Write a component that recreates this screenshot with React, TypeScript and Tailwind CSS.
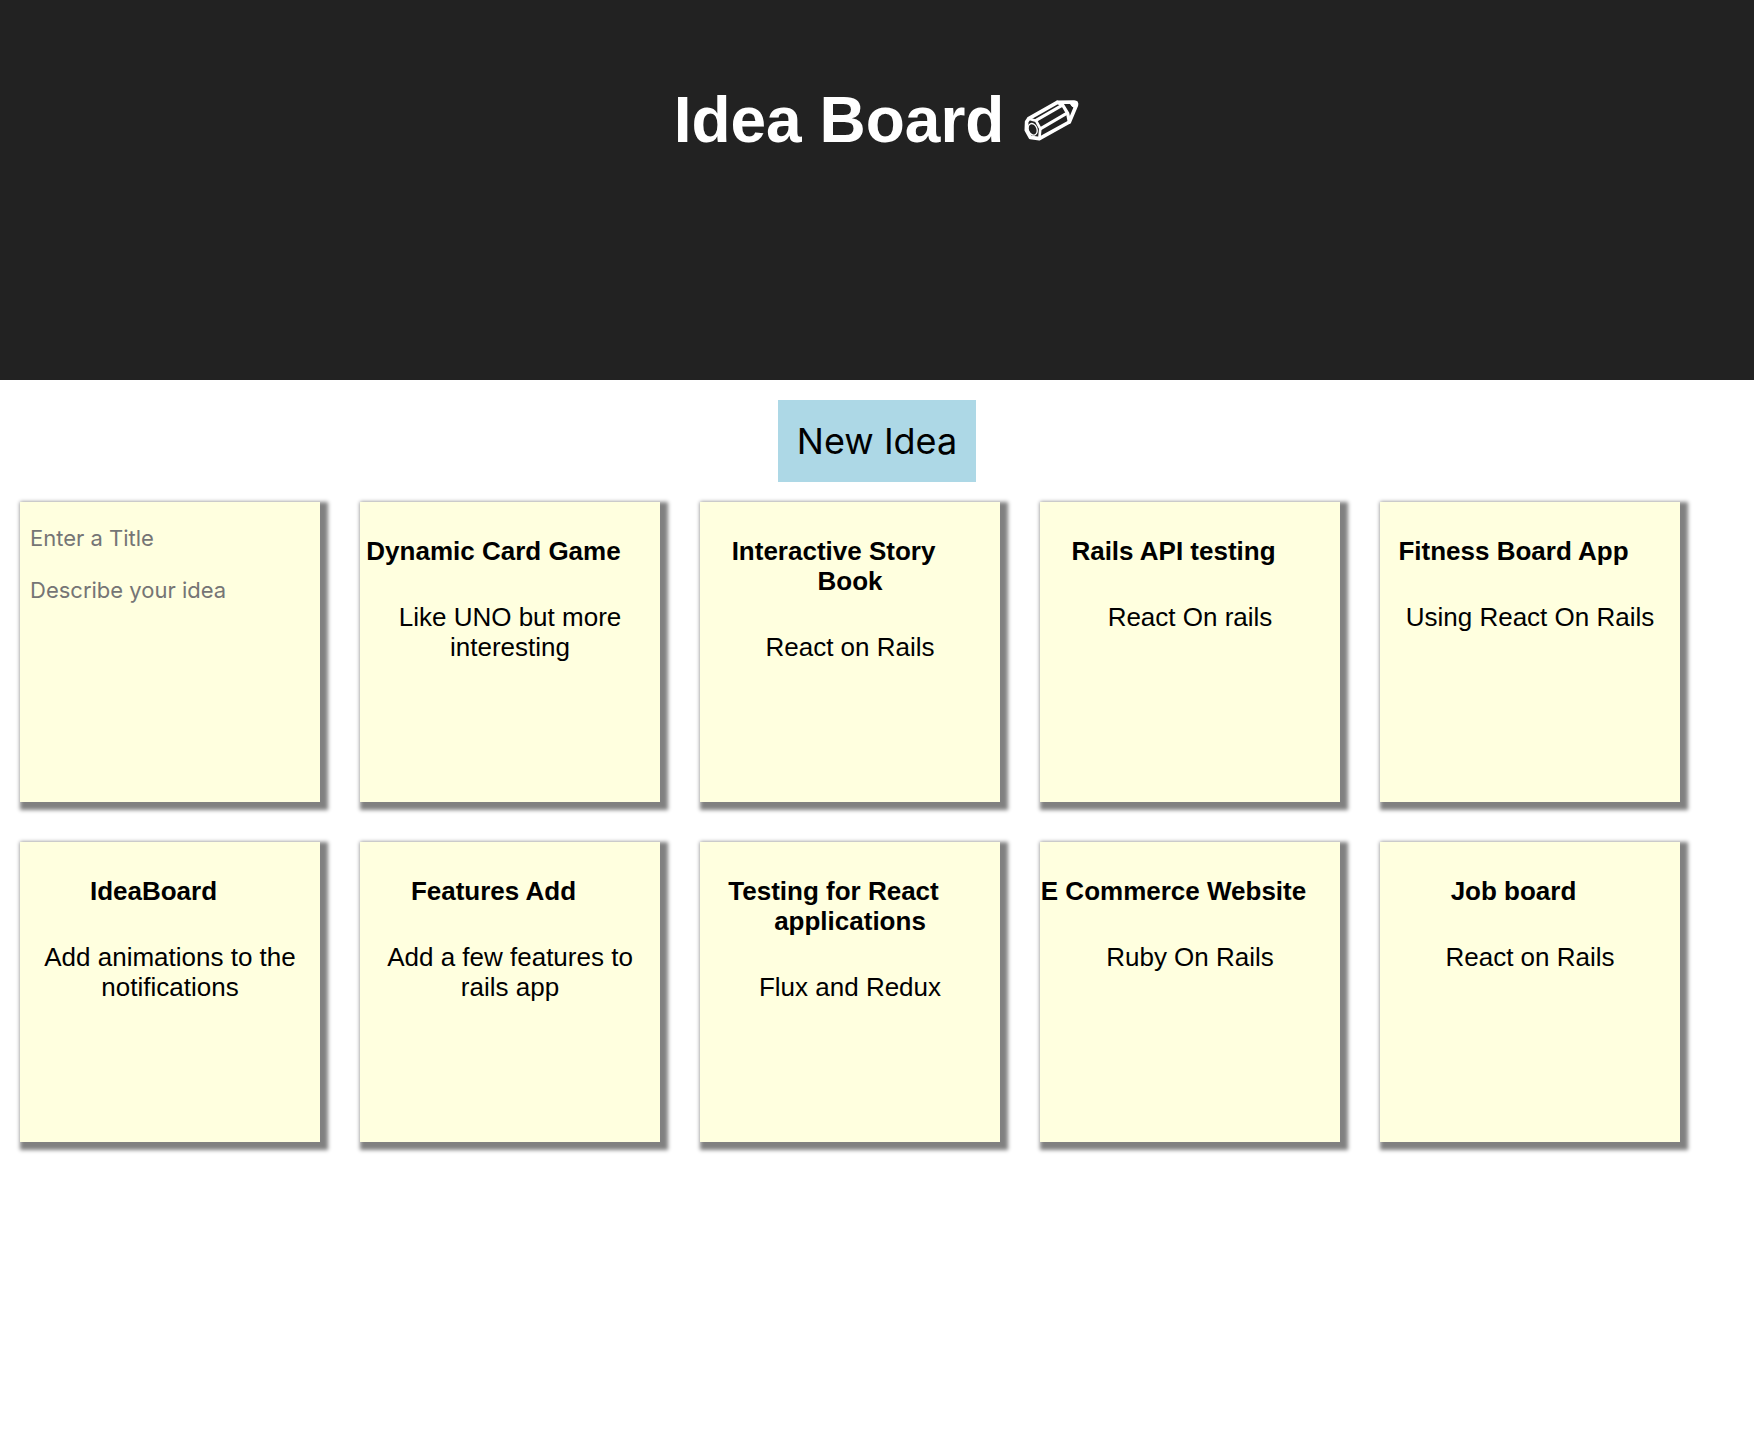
import { useState } from "react";

type Idea = { title: string; body: string };

const ideas: Idea[] = [
  { title: "Dynamic Card Game", body: "Like UNO but more interesting" },
  { title: "Interactive Story Book", body: "React on Rails" },
  { title: "Rails API testing", body: "React On rails" },
  { title: "Fitness Board App", body: "Using React On Rails" },
  { title: "IdeaBoard", body: "Add animations to the notifications" },
  { title: "Features Add", body: "Add a few features to rails app" },
  { title: "Testing for React applications", body: "Flux and Redux" },
  { title: "E Commerce Website", body: "Ruby On Rails" },
  { title: "Job board", body: "React on Rails" },
];

function Pencil() {
  return (
    <svg
      viewBox="30 30 192 144"
      className="h-12 w-16"
      fill="none"
      stroke="currentColor"
      strokeWidth="11"
      strokeLinejoin="round"
      strokeLinecap="round"
      aria-hidden="true"
    >
      <path d="M56 98 L142 49 L192 48 Q202 49 199 58 L178 108 L88 158 L61 154 L49 132 L50 107 Z" />
      <path d="M56 98 L78 104 L91 128 L88 158" strokeWidth="8" />
      <path d="M78 103 L156 58 M92 128 L170 82" strokeWidth="9" />
      <path d="M142 49 L158 57 L173 82 L178 108" strokeWidth="10" />
      <path d="M180 50 Q182 62 196 66 L201 48 Z" fill="currentColor" strokeWidth="3" />
      <ellipse cx="68" cy="130" rx="13" ry="18" transform="rotate(-22 68 130)" strokeWidth="4" />
    </svg>
  );
}

const tile = "h-[300px] w-[300px] bg-[#ffffdf] shadow-[4px_4px_4px_4px_#808080]";

function DraftTile() {
  const [title, setTitle] = useState("");
  const [body, setBody] = useState("");
  return (
    <form className={`${tile} flex flex-col gap-5 px-2.5 pt-5`}>
      <input
        aria-label="Title"
        placeholder="Enter a Title"
        value={title}
        onChange={(e) => setTitle(e.target.value)}
        className="h-8 w-full bg-transparent font-['Inter',sans-serif] text-[22px] leading-8 outline-none placeholder:text-[#757575]"
      />
      <textarea
        aria-label="Description"
        placeholder="Describe your idea"
        value={body}
        onChange={(e) => setBody(e.target.value)}
        className="h-40 w-full resize-none bg-transparent font-['Inter',sans-serif] text-[22px] leading-8 outline-none placeholder:text-[#757575]"
      />
    </form>
  );
}

function IdeaTile({ title, body }: Idea) {
  return (
    <article className={`${tile} pt-[34px] text-center text-[26px] leading-[30px]`}>
      <span className="float-right h-[30px] w-[33px]" />
      <h2 className="font-bold">{title}</h2>
      <p className="pt-9">{body}</p>
    </article>
  );
}

export default function App() {
  return (
    <div className="min-h-screen bg-white font-['Liberation_Sans',Arial,sans-serif] text-black">
      <header className="flex h-[380px] justify-center bg-[#222222] pt-20 pl-1 text-white">
        <h1 className="flex h-20 items-center gap-4 text-[64px] leading-[80px] font-bold">
          Idea Board
          <Pencil />
        </h1>
      </header>
      <main>
        <div className="flex justify-center py-5">
          <button
            type="button"
            className="h-[82px] bg-[#add8e6] px-[19px] font-['Inter',sans-serif] text-[36px] leading-[42px]"
          >
            New Idea
          </button>
        </div>
        <section className="flex flex-wrap gap-10 px-5 pb-5">
          <DraftTile />
          {ideas.map((idea) => (
            <IdeaTile key={idea.title} {...idea} />
          ))}
        </section>
      </main>
    </div>
  );
}
